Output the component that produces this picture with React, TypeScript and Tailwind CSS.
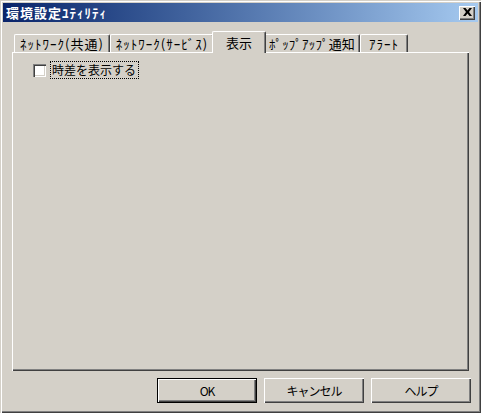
const font = "font-['Noto_Sans_CJK_JP','Noto_Sans',sans-serif]";

const tabs = [
  { label: "ﾈｯﾄﾜｰｸ(共通)", w: "w-[96px]", track: "tracking-[1px]" },
  { label: "ﾈｯﾄﾜｰｸ(ｻｰﾋﾞｽ)", w: "w-[104px]", track: "tracking-[1px]" },
  { label: "表示", w: "w-[54px]", track: "", active: true },
  { label: "ﾎﾟｯﾌﾟｱｯﾌﾟ通知", w: "w-[96px]", track: "tracking-[0.2px]" },
  { label: "ｱﾗｰﾄ", w: "w-[48px]", track: "tracking-[1px]" },
];

const Tab = ({ label, w, track, active }: { label: string; w: string; track: string; active?: boolean }) => {
  if (active) {
    return (
      <div
        className={`relative z-10 -mx-[2px] mb-[-1px] flex h-[22px] items-start justify-center whitespace-nowrap rounded-t-[2px] border-l border-t border-r border-white border-r-[#404040] bg-[#d4d0c8] pt-[3px] text-[13px] leading-[16px] shadow-[inset_-1px_0_#808080] ${w}`}
      >
        {label}
      </div>
    );
  }
  return (
    <div
      className={`flex h-[18px] items-center justify-center whitespace-nowrap rounded-t-[2px] border-l border-t border-r border-white border-r-[#404040] bg-[#d4d0c8] text-[13px] leading-[14px] shadow-[inset_-1px_0_#808080] ${track} ${w}`}
    >
      {label}
    </div>
  );
};

const Button = ({ label, isDefault }: { label: string; isDefault?: boolean }) => (
  <button
    className={`flex h-[25px] w-[100px] items-center justify-center bg-[#d4d0c8] text-[12px] leading-[14px] tracking-[-1px] text-black ${
      isDefault
        ? "border border-black shadow-[inset_1px_1px_#fff,inset_-1px_-1px_#404040,inset_-2px_-2px_#808080]"
        : "shadow-[inset_1px_1px_#fff,inset_-1px_-1px_#404040,inset_-2px_-2px_#808080]"
    }`}
  >
    {label}
  </button>
);

export default function App() {
  return (
    <div
      className={`flex h-[413px] w-[481px] flex-col bg-[#d4d0c8] p-[3px] text-black ${font} shadow-[inset_1px_1px_#d4d0c8,inset_2px_2px_#fff,inset_-1px_-1px_#404040,inset_-2px_-2px_#808080]`}
    >
      {/* title bar */}
      <div className="flex h-[19px] items-center justify-between bg-gradient-to-r from-[#0a246a] to-[#a6caf0] pl-[3px] pr-[3px]">
        <span className="whitespace-nowrap text-[13px] font-bold leading-[14px] tracking-[1px] text-white">環境設定ﾕﾃｨﾘﾃｨ</span>
        <div className="flex h-[14px] w-[16px] items-center justify-center bg-[#d4d0c8] shadow-[inset_1px_1px_#fff,inset_-1px_-1px_#404040,inset_-2px_-2px_#808080]">
          <svg width="9" height="8" viewBox="0 0 9 8" className="mt-[-1px]">
            <path d="M0 0h2.5l2 2.5 2-2.5H9L6 4l3 4H6.5l-2-2.5-2 2.5H0l3-4z" fill="#000" />
          </svg>
        </div>
      </div>

      {/* tab strip */}
      <div className="ml-[9px] mt-[9px] flex items-end pl-[2px]">
        {tabs.map((t) => (
          <Tab key={t.label} {...t} />
        ))}
      </div>

      {/* tab panel */}
      <div className="ml-[9px] h-[319px] w-[457px] pl-[21px] pt-[9px] shadow-[inset_1px_1px_#fff,inset_-1px_-1px_#404040,inset_-2px_-2px_#808080]">
        <label className="flex items-center gap-[4px]">
          <span className="h-[13px] w-[13px] bg-white shadow-[inset_1px_1px_#808080,inset_2px_2px_#404040,inset_-1px_-1px_#fff,inset_-2px_-2px_#d4d0c8]" />
          <span className="flex h-[18px] w-[89px] items-center whitespace-nowrap border border-dotted border-black pl-[1px] text-[12px] leading-[14px]">
            時差を表示する
          </span>
        </label>
      </div>

      {/* buttons */}
      <div className="mt-[7px] flex justify-end gap-[7px] pr-[7px]">
        <Button label="OK" isDefault />
        <Button label="キャンセル" />
        <Button label="ヘルプ" />
      </div>
    </div>
  );
}
